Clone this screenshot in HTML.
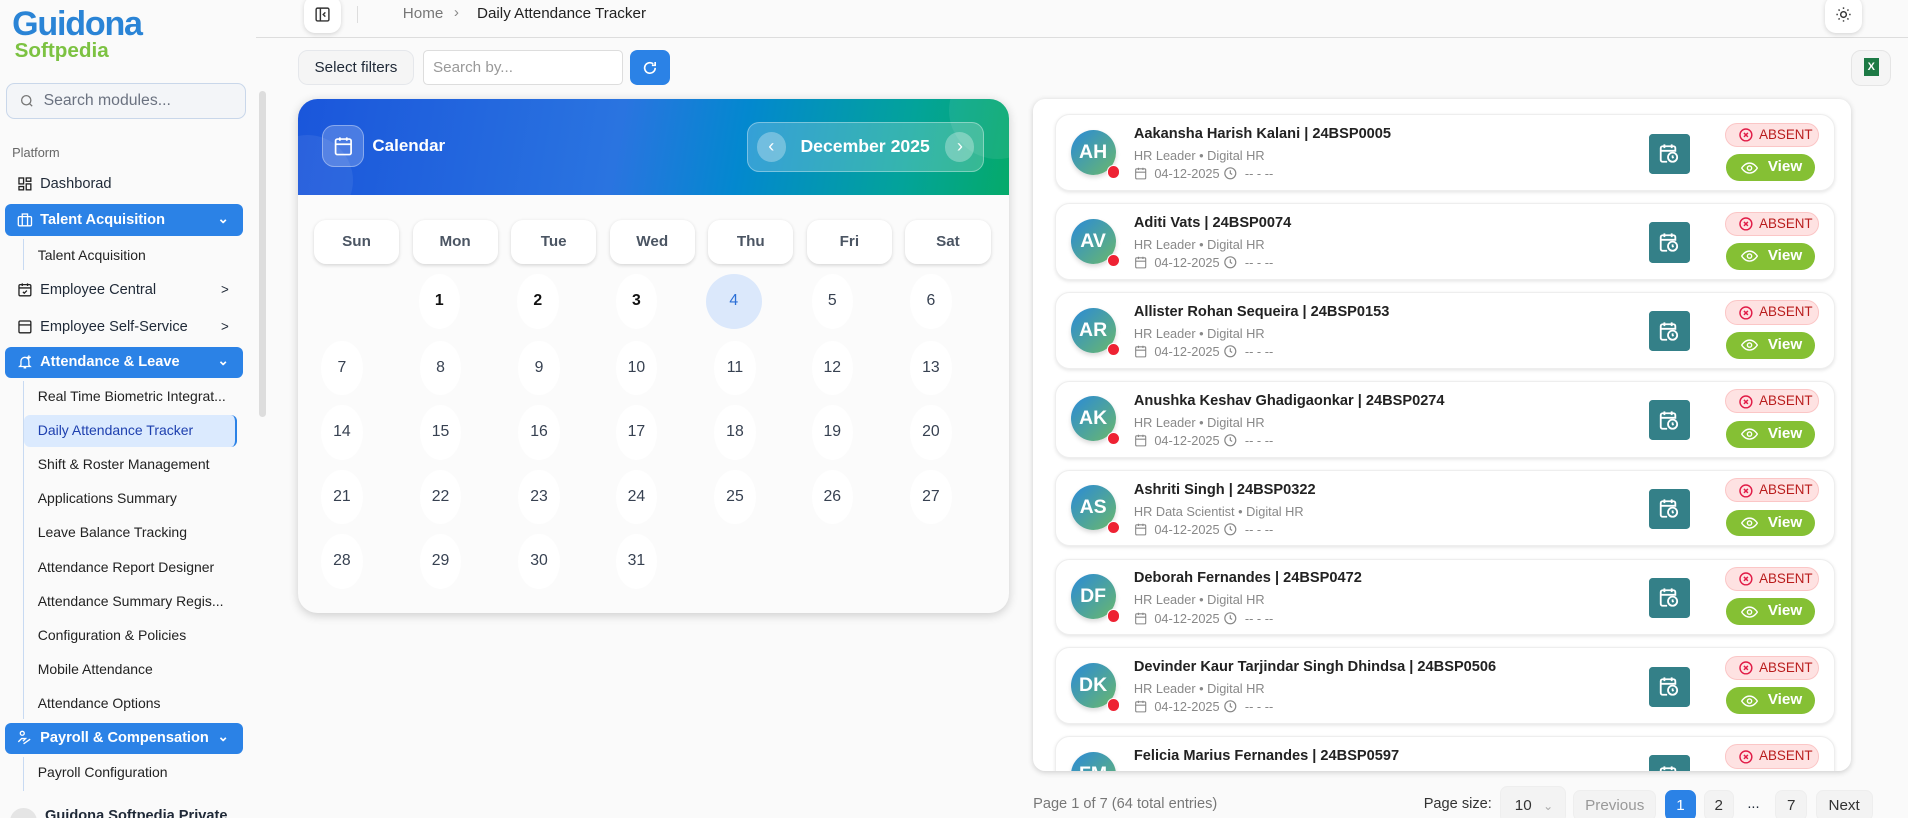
<!DOCTYPE html>
<html><head><meta charset="utf-8"><style>
*{box-sizing:border-box;margin:0;padding:0}
html,body{width:1908px;height:818px;overflow:hidden;background:#fafafa}
#root{width:1568px;height:672px;zoom:1.21684;position:relative;font-family:"Liberation Sans",sans-serif;color:#1f2937;background:#fafafa}
.a{position:absolute}
.side{left:0;top:0;width:210px;height:672px;background:#fafafa}
.logo1{left:10px;top:4px;font-size:28px;font-weight:bold;color:#2a84d6;letter-spacing:-1px}
.logo2{left:12px;top:32px;font-size:17px;font-weight:bold;color:#7cc242}
.srch{left:5px;top:68px;width:197px;height:30px;border:1px solid #c9d7ea;border-radius:7px;background:#f3f5f8;font-size:13px;color:#6b7280;padding:7px 0 0 30px}
.it{left:4px;width:196px;height:26px;font-size:12px;color:#1f2937;padding:6px 0 0 29px}
.act{background:#2b82e6;color:#fff;font-weight:bold;border-radius:5px}
.sub{left:31px;font-size:11.5px;color:#222}
.ic{position:absolute;left:10px;top:6px;width:13px;height:13px}
.chev{position:absolute;right:12px;top:5px;font-size:11px}
.vl{left:19px;width:1px;background:#c8daf2}
.btn{border:1px solid #e5e7eb;border-radius:8px;background:#f5f5f5}
.cal{left:245px;top:81px;width:584px;height:423px;border-radius:16px;background:#fbfbfb;box-shadow:0 2px 8px rgba(0,0,0,.18);overflow:hidden}
.calh{left:0;top:0;width:584px;height:79px;background:linear-gradient(100deg,#1a56db 0%,#2a74e0 45%,#0388cf 62%,#03a39a 85%,#05aa6a 100%)}
.dh{top:100px;width:70px;height:36px;background:#fff;border-radius:10px;box-shadow:0 1px 3px rgba(0,0,0,.15);font-size:12.5px;font-weight:bold;color:#4b5563;text-align:center;line-height:36px}
.dc{width:34px;height:45px;border-radius:50%;background:#fff;font-size:13px;color:#374151;text-align:center;line-height:45px}
.lst{left:849px;top:81px;width:672px;height:553px;border-radius:10px;background:#fff;box-shadow:0 1px 5px rgba(0,0,0,.18);overflow:hidden}
.row{left:18px;width:641px;height:63px;border-radius:12px;background:#fff;border:1px solid #eee;box-shadow:0 1px 3px rgba(0,0,0,.1)}
.av{left:12px;top:12px;width:37px;height:37px;border-radius:50%;background:linear-gradient(135deg,#2a8ad8,#6ab86c);color:#fff;font-weight:bold;font-size:16px;text-align:center;line-height:37px;box-shadow:0 2px 4px rgba(0,0,0,.15)}
.dot{left:42px;top:41px;width:11px;height:11px;border-radius:50%;background:#ee2233;border:1.5px solid #fff}
.nm{left:64px;top:9px;font-size:12px;font-weight:bold;color:#222}
.rl{left:64px;top:27px;font-size:10.5px;color:#888}
.dt{left:64px;top:42px;font-size:10.5px;color:#888}
.tl{left:487px;top:15px;width:34px;height:33px;background:#348088;border-radius:3px}
.ab{left:550px;top:6px;width:77px;height:20px;border-radius:10px;background:#fee2e2;border:1px solid #fbc6c6;color:#b91c1c;font-size:11px;line-height:18px;padding-left:27px}
.vw{left:551px;top:32px;width:73px;height:22px;border-radius:11px;background:#85c034;color:#fff;font-weight:bold;font-size:12.5px;line-height:22px;padding-left:34px}
.pg{top:649px;height:26px;border:1px solid #eee;border-radius:6px;background:#f3f3f3;font-size:12.5px;text-align:center;line-height:24px;color:#333}
</style></head><body><div id="root">
<div class="a side">
<div class="a logo1">Guidona</div><div class="a logo2">Softpedia</div>
<div class="a srch"><svg style="position:absolute;left:10px;top:8px" width="13" height="13" viewBox="0 0 24 24" fill="none" stroke="#777" stroke-width="2"><circle cx="11" cy="11" r="7"/><path d="M20 20l-4-4"/></svg>Search modules...</div>
<div class="a" style="left:213px;top:75px;width:6px;height:268px;border-radius:3px;background:#ddd"></div>
<div class="a" style="left:10px;top:119px;font-size:10.5px;color:#666">Platform</div>
<div class="a it" style="top:139px"><svg class="ic" viewBox="0 0 24 24" fill="none" stroke="#222" stroke-width="2"><rect x="3" y="3" width="7" height="9"/><rect x="14" y="3" width="7" height="5"/><rect x="14" y="12" width="7" height="9"/><rect x="3" y="16" width="7" height="5"/></svg>Dashborad</div>
<div class="a it act" style="top:168px"><svg class="ic" viewBox="0 0 24 24" fill="none" stroke="#fff" stroke-width="2"><rect x="2" y="7" width="20" height="14" rx="2"/><path d="M8 7V3h8v4M8 7v14M16 7v14"/></svg>Talent Acquisition<span class="chev">&#8964;</span></div>
<div class="a vl" style="top:196px;height:26px"></div>
<div class="a sub" style="top:203px">Talent Acquisition</div>
<div class="a it" style="top:226px"><svg class="ic" viewBox="0 0 24 24" fill="none" stroke="#222" stroke-width="2"><rect x="3" y="4" width="18" height="17" rx="2"/><path d="M3 9h18M8 2v4M16 2v4M9 15l2 2 4-4"/></svg>Employee Central<span class="chev" style="top:6px">&gt;</span></div>
<div class="a it" style="top:256px"><svg class="ic" viewBox="0 0 24 24" fill="none" stroke="#222" stroke-width="2"><rect x="3" y="3" width="18" height="18" rx="2"/><path d="M3 9h18"/></svg>Employee Self-Service<span class="chev" style="top:6px">&gt;</span></div>
<div class="a it act" style="top:285px"><svg class="ic" viewBox="0 0 24 24" fill="none" stroke="#fff" stroke-width="2"><path d="M6 17V11a6 6 0 0112 0v6l2 2H4zM10 21h4M18 2v6M15 5h6"/></svg>Attendance &amp; Leave<span class="chev">&#8964;</span></div>
<div class="a vl" style="top:313px;height:278px"></div>
<div class="a sub" style="top:319px">Real Time Biometric Integrat...</div>
<div class="a" style="left:20px;top:341px;width:175px;height:26px;background:#dbeafe;border-radius:5px;border-right:2px solid #2b82e6"></div>
<div class="a sub" style="top:347px;color:#1e40af">Daily Attendance Tracker</div>
<div class="a sub" style="top:375px">Shift &amp; Roster Management</div>
<div class="a sub" style="top:403px">Applications Summary</div>
<div class="a sub" style="top:431px">Leave Balance Tracking</div>
<div class="a sub" style="top:459px">Attendance Report Designer</div>
<div class="a sub" style="top:487px">Attendance Summary Regis...</div>
<div class="a sub" style="top:515px">Configuration &amp; Policies</div>
<div class="a sub" style="top:543px">Mobile Attendance</div>
<div class="a sub" style="top:571px">Attendance Options</div>
<div class="a it act" style="top:594px"><svg class="ic" viewBox="0 0 24 24" fill="none" stroke="#fff" stroke-width="2"><circle cx="8" cy="5" r="3"/><path d="M2 18l5-5h6l-4 4M10 21l10-7"/></svg>Payroll &amp; Compensation<span class="chev">&#8964;</span></div>
<div class="a vl" style="top:622px;height:28px"></div>
<div class="a sub" style="top:628px">Payroll Configuration</div>
<div class="a" style="left:8px;top:664px;width:22px;height:22px;border-radius:50%;background:#e5e5e5"></div>
<div class="a" style="left:37px;top:664px;font-size:12px;font-weight:bold">Guidona Softpedia Private</div>
</div>
<div class="a" style="left:210px;top:30px;width:1358px;height:1px;background:#ddd"></div>
<div class="a" style="left:250px;top:-3px;width:30px;height:30px;border-radius:9px;background:#fff;box-shadow:0 1px 4px rgba(0,0,0,.15)"><svg style="position:absolute;left:8px;top:8px" width="14" height="14" viewBox="0 0 24 24" fill="none" stroke="#333" stroke-width="2"><rect x="3" y="3" width="18" height="18" rx="2"/><path d="M9 3v18M16 9l-3 3 3 3"/></svg></div>
<div class="a" style="left:293px;top:5px;width:1px;height:14px;background:#ddd"></div>
<div class="a" style="left:331px;top:4px;font-size:12.5px;color:#777">Home</div>
<div class="a" style="left:373px;top:3px;font-size:12.5px;color:#888">&#8250;</div>
<div class="a" style="left:392px;top:4px;font-size:12.5px;color:#222">Daily Attendance Tracker</div>
<div class="a" style="left:1500px;top:-3px;width:30px;height:30px;border-radius:9px;background:#fff;box-shadow:0 1px 4px rgba(0,0,0,.15)"><svg style="position:absolute;left:8px;top:8px" width="14" height="14" viewBox="0 0 24 24" fill="none" stroke="#333" stroke-width="2"><circle cx="12" cy="12" r="4"/><path d="M12 2v2M12 20v2M2 12h2M20 12h2M5 5l1.5 1.5M17.5 17.5L19 19M5 19l1.5-1.5M17.5 6.5L19 5"/></svg></div>
<div class="a btn" style="left:245px;top:41px;width:95px;height:29px;font-size:12.5px;text-align:center;line-height:28px">Select filters</div>
<div class="a" style="left:348px;top:41px;width:164px;height:29px;border:1px solid #ddd;border-radius:4px;background:#fff;font-size:12.5px;color:#999;padding:7px 7px">Search by...</div>
<div class="a" style="left:518px;top:41px;width:33px;height:29px;border-radius:6px;background:#2b82e6"><svg style="position:absolute;left:10px;top:8px" width="13" height="13" viewBox="0 0 24 24" fill="none" stroke="#fff" stroke-width="2.5"><path d="M20 12a8 8 0 11-3-6.2M20 3v5h-5"/></svg></div>
<div class="a" style="left:1521px;top:41px;width:33px;height:30px;border-radius:8px;background:#f5f5f5;border:1px solid #e5e5e5"><div class="a" style="left:10px;top:6px;width:12px;height:15px;background:#1d7a45;color:#fff;font-size:9px;font-weight:bold;text-align:center;line-height:15px">X</div></div>
<div class="a cal">
<div class="a calh">
<div class="a" style="left:-30px;top:30px;width:75px;height:75px;border-radius:50%;background:rgba(255,255,255,.07)"></div>
<div class="a" style="left:535px;top:-30px;width:80px;height:80px;border-radius:50%;background:rgba(255,255,255,.08)"></div>
<div class="a" style="left:20px;top:22px;width:34px;height:34px;border-radius:10px;background:rgba(255,255,255,.2);border:1px solid rgba(255,255,255,.35)"><svg style="position:absolute;left:8px;top:7px" width="17" height="18" viewBox="0 0 24 24" fill="none" stroke="#fff" stroke-width="2"><rect x="3" y="4" width="18" height="18" rx="2"/><path d="M3 10h18M8 2v4M16 2v4"/></svg></div>
<div class="a" style="left:61px;top:31px;font-size:14px;font-weight:bold;color:#fff">Calendar</div>
<div class="a" style="left:369px;top:19px;width:195px;height:41px;border-radius:10px;background:rgba(255,255,255,.2);border:1px solid rgba(255,255,255,.35)">
<div class="a" style="left:7px;top:8px;width:24px;height:24px;border-radius:50%;background:rgba(255,255,255,.3);color:#fff;text-align:center;line-height:23px;font-size:15px">&#8249;</div>
<div class="a" style="left:43px;top:11px;font-size:14.5px;font-weight:bold;color:#fff">December 2025</div>
<div class="a" style="left:162px;top:8px;width:24px;height:24px;border-radius:50%;background:rgba(255,255,255,.3);color:#fff;text-align:center;line-height:23px;font-size:15px">&#8250;</div>
</div></div>
<div class="a dh" style="left:13px">Sun</div><div class="a dh" style="left:94px">Mon</div><div class="a dh" style="left:175px">Tue</div><div class="a dh" style="left:256px">Wed</div><div class="a dh" style="left:337px">Thu</div><div class="a dh" style="left:418px">Fri</div><div class="a dh" style="left:499px">Sat</div>
<div class="a dc" style="left:99px;top:144px;color:#111;font-weight:bold">1</div><div class="a dc" style="left:180px;top:144px;color:#111;font-weight:bold">2</div><div class="a dc" style="left:261px;top:144px;color:#111;font-weight:bold">3</div><div class="a dc" style="left:335px;top:144px;width:46px;background:#dbe8fb;color:#2b6fd6">4</div><div class="a dc" style="left:422px;top:144px">5</div><div class="a dc" style="left:503px;top:144px">6</div>
<div class="a dc" style="left:19px;top:199px">7</div><div class="a dc" style="left:100px;top:199px">8</div><div class="a dc" style="left:181px;top:199px">9</div><div class="a dc" style="left:261px;top:199px">10</div><div class="a dc" style="left:342px;top:199px">11</div><div class="a dc" style="left:422px;top:199px">12</div><div class="a dc" style="left:503px;top:199px">13</div>
<div class="a dc" style="left:19px;top:252px">14</div><div class="a dc" style="left:100px;top:252px">15</div><div class="a dc" style="left:181px;top:252px">16</div><div class="a dc" style="left:261px;top:252px">17</div><div class="a dc" style="left:342px;top:252px">18</div><div class="a dc" style="left:422px;top:252px">19</div><div class="a dc" style="left:503px;top:252px">20</div>
<div class="a dc" style="left:19px;top:305px">21</div><div class="a dc" style="left:100px;top:305px">22</div><div class="a dc" style="left:181px;top:305px">23</div><div class="a dc" style="left:261px;top:305px">24</div><div class="a dc" style="left:342px;top:305px">25</div><div class="a dc" style="left:422px;top:305px">26</div><div class="a dc" style="left:503px;top:305px">27</div>
<div class="a dc" style="left:19px;top:358px">28</div><div class="a dc" style="left:100px;top:358px">29</div><div class="a dc" style="left:181px;top:358px">30</div><div class="a dc" style="left:261px;top:358px">31</div>
</div>
<div class="a lst" id="lst">
<div class="a" style="left:676px;top:10px;width:0;height:0;border:5px solid transparent;border-bottom-color:#ccc;border-top:0"></div>
<div class="a" style="left:676px;top:20px;width:10px;height:378px;border-radius:5px;background:#e6e6e6"></div>
<div class="a" style="left:676px;top:538px;width:0;height:0;border:5px solid transparent;border-top-color:#ccc;border-bottom:0"></div>
</div>
<div class="a" style="left:849px;top:654px;font-size:12px;color:#777">Page 1 of 7 (64 total entries)</div>
<div class="a" style="left:1170px;top:654px;font-size:12px;color:#333">Page size:</div>
<div class="a pg" style="left:1233px;top:646px;width:54px;height:30px;text-align:left;padding:3px 0 0 11px">10 <span style="color:#aaa;font-size:10px;margin-left:6px">&#8964;</span></div>
<div class="a pg" style="left:1293px;width:68px;color:#999">Previous</div>
<div class="a pg" style="left:1368px;width:26px;background:#2b82e6;color:#fff;border-color:#2b82e6">1</div>
<div class="a pg" style="left:1400px;width:25px">2</div>
<div class="a" style="left:1436px;top:654px;font-size:12px">...</div>
<div class="a pg" style="left:1459px;width:26px">7</div>
<div class="a pg" style="left:1492px;width:47px">Next</div>
<script>
var d=[["AH","Aakansha Harish Kalani | 24BSP0005","HR Leader"],["AV","Aditi Vats | 24BSP0074","HR Leader"],["AR","Allister Rohan Sequeira | 24BSP0153","HR Leader"],["AK","Anushka Keshav Ghadigaonkar | 24BSP0274","HR Leader"],["AS","Ashriti Singh | 24BSP0322","HR Data Scientist"],["DF","Deborah Fernandes | 24BSP0472","HR Leader"],["DK","Devinder Kaur Tarjindar Singh Dhindsa | 24BSP0506","HR Leader"],["FM","Felicia Marius Fernandes | 24BSP0597","HR Leader"]];
var cal='<svg width="11" height="12" viewBox="0 0 24 24" fill="none" stroke="#888" stroke-width="2" style="vertical-align:-2px"><rect x="3" y="4" width="18" height="18" rx="2"/><path d="M3 10h18M8 2v4M16 2v4"/></svg>';
var clk='<svg width="12" height="12" viewBox="0 0 24 24" fill="none" stroke="#888" stroke-width="2" style="vertical-align:-2px"><circle cx="12" cy="12" r="9"/><path d="M12 7v5l3 2"/></svg>';
var h='';d.forEach(function(r,i){h+='<div class="a row" style="top:'+(13+i*73)+'px"><div class="a av">'+r[0]+'</div><div class="a dot"></div><div class="a nm">'+r[1]+'</div><div class="a rl">'+r[2]+' &bull; Digital HR</div><div class="a dt">'+cal+'&nbsp; 04-12-2025 '+clk+'&nbsp; -- - --</div><div class="a tl"><svg style="position:absolute;left:8px;top:7px" width="18" height="19" viewBox="0 0 24 24" fill="none" stroke="#fff" stroke-width="2"><path d="M10 21H5a2 2 0 01-2-2V6a2 2 0 012-2h12a2 2 0 012 2v4M3 9h16M7 2v4M15 2v4"/><circle cx="16" cy="16" r="5"/><path d="M16 14v2l1 1"/></svg></div><div class="a ab"><svg style="position:absolute;left:10px;top:3px" width="13" height="13" viewBox="0 0 24 24" fill="none" stroke="#e11d48" stroke-width="2.2"><circle cx="12" cy="12" r="9"/><path d="M9 9l6 6M15 9l-6 6"/></svg>ABSENT</div><div class="a vw"><svg style="position:absolute;left:12px;top:6px" width="14" height="10" viewBox="0 0 24 16" fill="none" stroke="#fff" stroke-width="2"><path d="M1 8s4-7 11-7 11 7 11 7-4 7-11 7S1 8 1 8z"/><circle cx="12" cy="8" r="3"/></svg>View</div></div>';});
document.getElementById('lst').insertAdjacentHTML('afterbegin',h);
</script>
</div></body></html>
